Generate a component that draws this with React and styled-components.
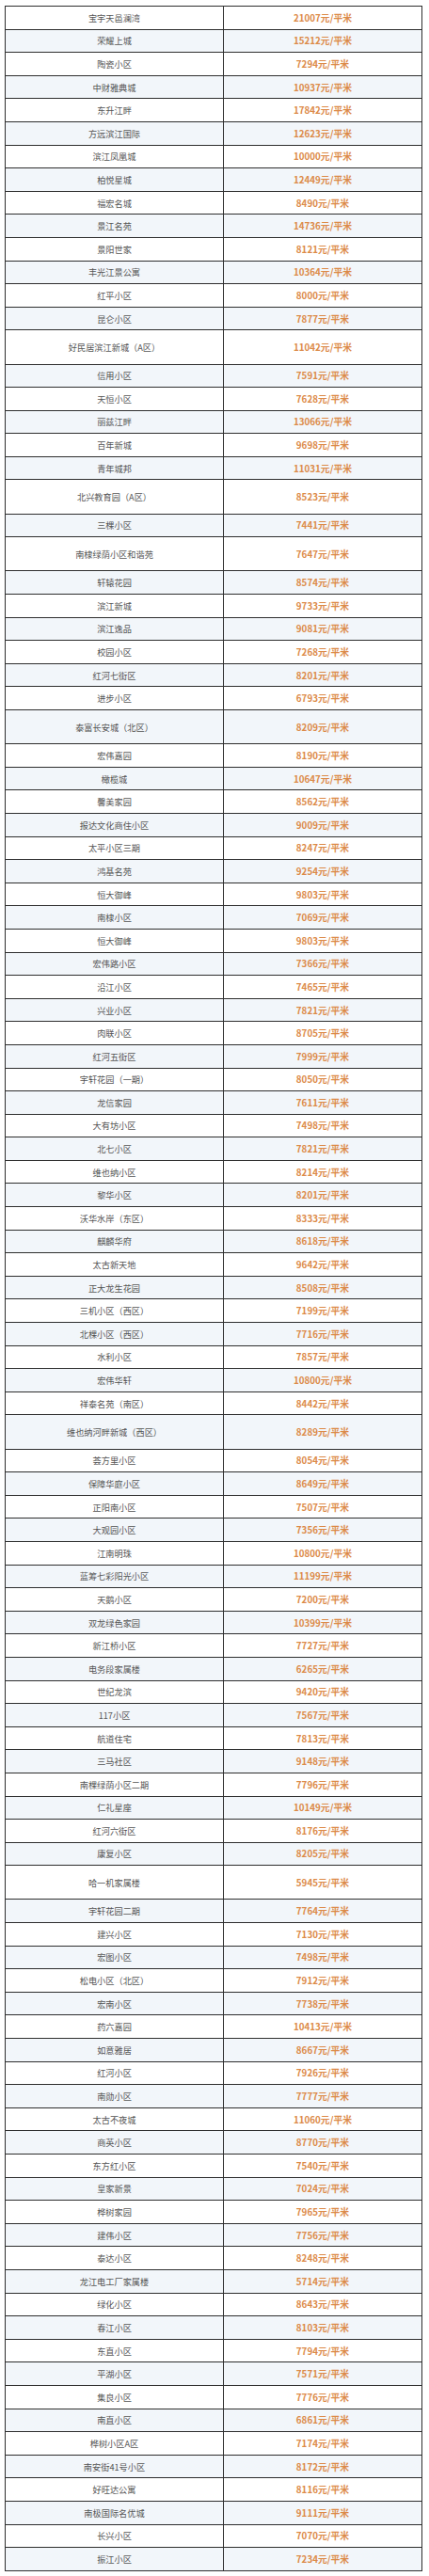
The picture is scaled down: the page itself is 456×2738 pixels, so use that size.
import styled, { createGlobalStyle } from 'styled-components';

const GlobalStyle = createGlobalStyle`
    html, body {
        margin: 0;
        padding: 0;
        background: #ffffff;
    }
    body {
        font-family: "Noto Sans CJK SC", "Liberation Sans", sans-serif;
    }
`;

// [小区, 均价, 两行高]
const rows = [
    ['宝宇天邑澜湾', 21007],
    ['荣耀上城', 15212],
    ['陶瓷小区', 7294],
    ['中财雅典城', 10937],
    ['东升江畔', 17842],
    ['方远滨江国际', 12623],
    ['滨江凤凰城', 10000],
    ['柏悦星城', 12449],
    ['福宏名城', 8490],
    ['景江名苑', 14736],
    ['景阳世家', 8121],
    ['丰光江景公寓', 10364],
    ['红平小区', 8000],
    ['昆仑小区', 7877],
    ['好民居滨江新城（A区）', 11042, true],
    ['信用小区', 7591],
    ['天恒小区', 7628],
    ['丽兹江畔', 13066],
    ['百年新城', 9698],
    ['青年城邦', 11031],
    ['北兴教育园（A区）', 8523, true],
    ['三棵小区', 7441],
    ['南棣绿荫小区和谐苑', 7647, true],
    ['轩辕花园', 8574],
    ['滨江新城', 9733],
    ['滨江逸品', 9081],
    ['校园小区', 7268],
    ['红河七街区', 8201],
    ['进步小区', 6793],
    ['泰富长安城（北区）', 8209, true],
    ['宏伟嘉园', 8190],
    ['橄榄城', 10647],
    ['馨美家园', 8562],
    ['报达文化商住小区', 9009],
    ['太平小区三期', 8247],
    ['鸿基名苑', 9254],
    ['恒大御峰', 9803],
    ['南棣小区', 7069],
    ['恒大御峰', 9803],
    ['宏伟路小区', 7366],
    ['沿江小区', 7465],
    ['兴业小区', 7821],
    ['肉联小区', 8705],
    ['红河五街区', 7999],
    ['宇轩花园（一期）', 8050],
    ['龙信家园', 7611],
    ['大有坊小区', 7498],
    ['北七小区', 7821],
    ['维也纳小区', 8214],
    ['黎华小区', 8201],
    ['沃华水岸（东区）', 8333],
    ['麒麟华府', 8618],
    ['太古新天地', 9642],
    ['正大龙生花园', 8508],
    ['三机小区（西区）', 7199],
    ['北棵小区（西区）', 7716],
    ['水利小区', 7857],
    ['宏伟华轩', 10800],
    ['祥泰名苑（南区）', 8442],
    ['维也纳河畔新城（西区）', 8289, true],
    ['荟方里小区', 8054],
    ['保障华庭小区', 8649],
    ['正阳南小区', 7507],
    ['大观园小区', 7356],
    ['江南明珠', 10800],
    ['蓝筹七彩阳光小区', 11199],
    ['天鹅小区', 7200],
    ['双龙绿色家园', 10399],
    ['新江桥小区', 7727],
    ['电务段家属楼', 6265],
    ['世纪龙滨', 9420],
    ['117小区', 7567],
    ['航道住宅', 7813],
    ['三马社区', 9148],
    ['南棵绿荫小区二期', 7796],
    ['仁礼星座', 10149],
    ['红河六街区', 8176],
    ['康复小区', 8205],
    ['哈一机家属楼', 5945, true],
    ['宇轩花园二期', 7764],
    ['建兴小区', 7130],
    ['宏图小区', 7498],
    ['松电小区（北区）', 7912],
    ['宏南小区', 7738],
    ['药六嘉园', 10413],
    ['如意雅居', 8667],
    ['红河小区', 7926],
    ['南勋小区', 7777],
    ['太古不夜城', 11060],
    ['商英小区', 8770],
    ['东方红小区', 7540],
    ['皇家新景', 7024],
    ['桦树家园', 7965],
    ['建伟小区', 7756],
    ['泰达小区', 8248],
    ['龙江电工厂家属楼', 5714],
    ['绿化小区', 8643],
    ['春江小区', 8103],
    ['东直小区', 7794],
    ['平湖小区', 7571],
    ['集良小区', 7776],
    ['南直小区', 6861],
    ['桦树小区A区', 7174],
    ['南安街41号小区', 8172],
    ['好旺达公寓', 8116],
    ['南极国际名优城', 9111],
    ['长兴小区', 7070],
    ['振江小区', 7234],
];

const PriceTable = styled.div`
    width: 444px;
    margin: 6px 0 0 5px;
    box-sizing: border-box;
    border-top: 1px solid #2e2e2e;
    border-left: 1px solid #2e2e2e;
`;

const Row = styled.div`
    display: grid;
    grid-template-columns: 232px 211px;
    height: ${(props) => (props.$tall ? '36.2px' : '24.6px')};
    background: ${(props) => (props.$striped ? '#f2f6fa' : '#ffffff')};
`;

const Cell = styled.div`
    display: flex;
    align-items: center;
    justify-content: center;
    box-sizing: border-box;
    border-right: 1px solid #2e2e2e;
    border-bottom: 1px solid #2e2e2e;
    white-space: nowrap;
`;

const NameCell = styled(Cell)`
    font-size: 9.2px;
    color: #555555;
`;

const PriceCell = styled(Cell)`
    font-size: 9.8px;
    font-weight: 700;
    color: #dc8a48;
`;

function App() {
    return (
        <>
            <GlobalStyle />
            <PriceTable>
                {rows.map(([name, price, tall], i) => (
                    <Row key={i} $tall={tall} $striped={i % 2 === 1}>
                        <NameCell>{name}</NameCell>
                        <PriceCell>{price}元/平米</PriceCell>
                    </Row>
                ))}
            </PriceTable>
        </>
    );
}

export default App;
